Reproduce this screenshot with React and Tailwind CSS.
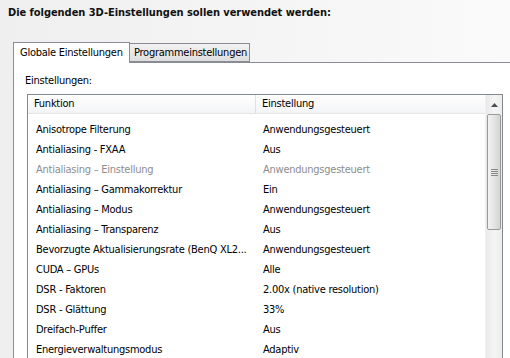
import React from 'react';

const rows = [
  ['Anisotrope Filterung', 'Anwendungsgesteuert'],
  ['Antialiasing - FXAA', 'Aus'],
  ['Antialiasing – Einstellung', 'Anwendungsgesteuert', true],
  ['Antialiasing – Gammakorrektur', 'Ein'],
  ['Antialiasing – Modus', 'Anwendungsgesteuert'],
  ['Antialiasing – Transparenz', 'Aus'],
  ['Bevorzugte Aktualisierungsrate (BenQ XL2...', 'Anwendungsgesteuert'],
  ['CUDA – GPUs', 'Alle'],
  ['DSR - Faktoren', '2.00x (native resolution)'],
  ['DSR - Glättung', '33%'],
  ['Dreifach-Puffer', 'Aus'],
  ['Energieverwaltungsmodus', 'Adaptiv'],
];

const font = { fontFamily: '"DejaVu Sans Condensed", "Liberation Sans", sans-serif' };

const Scrollbar = () => (
  <div className="w-[17px] shrink-0 flex flex-col bg-gradient-to-r from-[#e9e9e9] via-[#f5f5f5] to-[#ececec] border-l border-[#f0f0f0]">
    <div className="h-[19px] shrink-0 flex items-center justify-center">
      <svg width="7" height="4" viewBox="0 0 7 4">
        <path d="M0 4 L3.5 0 L7 4 Z" fill="#4d4d4d" />
      </svg>
    </div>
    <div className="mx-px h-[116px] shrink-0 rounded-[2px] border border-[#9a9a9a] bg-gradient-to-r from-[#f3f3f3] via-[#e4e4e4] to-[#d4d4d4] flex items-center justify-center">
      <div className="flex flex-col gap-[1px]">
        <div className="w-[7px] h-px bg-[#8a8a8a]" />
        <div className="w-[7px] h-px bg-[#8a8a8a]" />
        <div className="w-[7px] h-px bg-[#8a8a8a]" />
        <div className="w-[7px] h-px bg-[#8a8a8a]" />
      </div>
    </div>
    <div className="flex-1" />
  </div>
);

export default function App() {
  return (
    <div
      className="w-[510px] h-[358px] overflow-hidden flex flex-col bg-gradient-to-r from-[#efefef] to-[#fafafa] text-[11px] text-black"
      style={font}
    >
      <div className="pl-[8px] pt-[5px] h-[42px] font-bold text-[#111] tracking-[-0.05px]">
        Die folgenden 3D-Einstellungen sollen verwendet werden:
      </div>

      <div className="pl-[13px] flex items-end h-[21px] relative z-10 tracking-[-0.25px]">
        <div className="h-[21px] w-[117px] border border-b-0 border-[#898c95] bg-white pl-[6px] pt-[3px] leading-[14px] whitespace-nowrap">
          Globale Einstellungen
        </div>
        <div className="h-[19px] mb-px w-[120px] border border-l-0 border-[#898c95] bg-gradient-to-b from-[#f2f2f2] to-[#dedede] pl-[4px] pt-[2px] leading-[14px] whitespace-nowrap">
          Programmeinstellungen
        </div>
      </div>

      <div className="ml-[13px] -mt-px flex-1 min-h-0 border-l border-t border-[#898c95] bg-white flex flex-col tracking-[-0.25px]">
        <div className="pl-[11px] pt-[11px] h-[31px] leading-[14px]">Einstellungen:</div>
        <div className="ml-[13px] mr-[7px] flex-1 min-h-0 border-l border-t border-r border-[#828790] flex overflow-hidden">
          <div className="flex-1 min-w-0 flex flex-col">
            <div className="h-[19px] shrink-0 flex bg-gradient-to-b from-white to-[#f3f4f6] border-b border-[#e5e5e5]">
              <div className="w-[228px] border-r border-[#e0e0e0] pl-[6px] leading-[18px]">Funktion</div>
              <div className="flex-1 pl-[6px] leading-[18px]">Einstellung</div>
            </div>
            <div className="pt-[6px] flex flex-col">
              {rows.map(([name, value, muted]) => (
                <div
                  key={name}
                  className={`h-[20px] flex items-center ${muted ? 'text-[#8d8d8d]' : 'text-black'}`}
                >
                  <div className="w-[229px] pl-[8px] whitespace-nowrap overflow-hidden">{name}</div>
                  <div className="flex-1 pl-[6px] whitespace-nowrap">{value}</div>
                </div>
              ))}
            </div>
          </div>
          <Scrollbar />
        </div>
      </div>
    </div>
  );
}
